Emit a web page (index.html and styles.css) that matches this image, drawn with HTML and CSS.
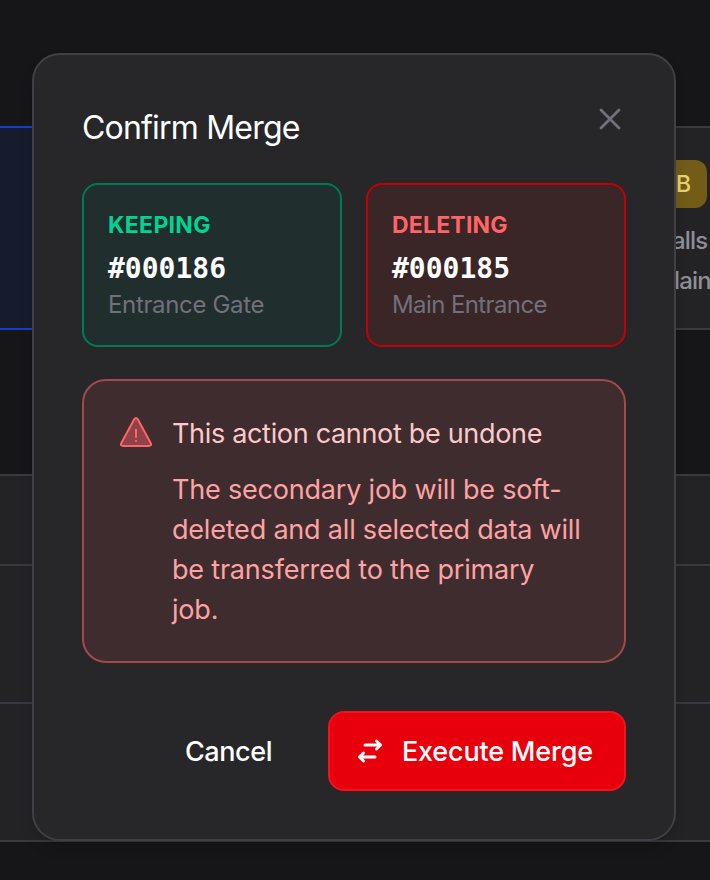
FILE: index.html
```html
<!DOCTYPE html>
<html lang="en">
<head>
    <meta charset="UTF-8">
    <meta name="viewport" content="width=device-width, initial-scale=1.0">
    <title>Confirm Merge</title>
    <link rel="stylesheet" href="styles.css">
</head>
<body>
    <!-- Page behind the dialog -->
    <div class="page">
        <div class="jobs">
            <div class="job job-selected"></div>
            <div class="job job-other">
                <span class="badge">B</span>
                <p class="job-line">alls</p>
                <p class="job-line job-address">lain</p>
            </div>
        </div>
        <div class="table">
            <div class="table-head"></div>
            <div class="table-row"></div>
            <div class="table-row"></div>
        </div>
    </div>

    <!-- Dialog -->
    <div class="overlay">
        <div class="dialog" role="dialog" aria-modal="true" aria-labelledby="dialog-title">
            <div class="dialog-header">
                <h2 class="dialog-title" id="dialog-title">Confirm Merge</h2>
                <button class="close" type="button" aria-label="Close">
                    <svg width="32" height="32" viewBox="0 0 32 32" fill="none" stroke="currentColor" stroke-width="2.8" stroke-linecap="round">
                        <path d="M7 7l18 18M25 7L7 25"/>
                    </svg>
                </button>
            </div>

            <div class="cards">
                <div class="card card-keep">
                    <div class="card-label keep-label">KEEPING</div>
                    <div class="card-number">#000186</div>
                    <div class="card-place keep-place">Entrance Gate</div>
                </div>
                <div class="card card-delete">
                    <div class="card-label delete-label">DELETING</div>
                    <div class="card-number">#000185</div>
                    <div class="card-place">Main Entrance</div>
                </div>
            </div>

            <div class="warning">
                <svg class="warning-icon" width="32" height="32" viewBox="0 0 32 32" fill="none" stroke="#ff6467" stroke-width="2" stroke-linecap="round" stroke-linejoin="round">
                    <path d="M14.2 2.3Q16 -.2 17.8 2.3L30.8 26.2Q31.7 29 29 29H3Q.3 29 1.2 26.2Z" fill="#8f4347"/>
                    <path d="M16 12.5v7.5M16 24.1v.2" stroke-width="2"/>
                </svg>
                <div class="warning-text">
                    <h3 class="warning-title">This action cannot be undone</h3>
                    <p class="warning-body">The secondary job will be soft-<br>deleted and all selected data will<br>be transferred to the primary<br>job.</p>
                </div>
            </div>

            <div class="actions">
                <button class="btn btn-cancel" type="button">Cancel</button>
                <button class="btn btn-merge" type="button">
                    <svg width="32" height="32" viewBox="0 0 32 32" fill="none" stroke="currentColor" stroke-width="3" stroke-linecap="round" stroke-linejoin="round">
                        <path d="M11 10H26.5M22.5 6L26.5 10L22.5 14M21 22H5.5M9.5 18L5.5 22L9.5 26"/>
                    </svg>
                    <span>Execute Merge</span>
                </button>
            </div>
        </div>
    </div>
</body>
</html>
```

FILE: styles.css
```css
* {
    box-sizing: border-box;
}
body {
    margin: 0;
    height: 880px;
    overflow: hidden;
    background-color: #161618;
    color: #fff;
    font-family: Inter, "Noto Sans", sans-serif;
}
h2, h3, p {
    margin: 0;
}
svg {
    display: block;
    flex-shrink: 0;
}
button {
    font: inherit;
    padding: 0;
    border: 0;
    background: none;
}

/* page */
.page {
    padding-top: 126px;
}
.jobs {
    display: grid;
    grid-template-columns: 300px 1fr;
    gap: 48px;
    height: 204px;
    margin-bottom: 144px;
}
.job {
    border: 2px solid #3a3a3e;
    border-width: 2px 0;
}
.job-selected {
    background-color: #161c2e;
    border-color: #123fce;
}
.job-other {
    display: flex;
    flex-direction: column;
    align-items: flex-start;
    padding: 32px 0 0 300px;
    background-color: #232325;
}
.badge {
    height: 48px;
    width: 59px;
    padding-left: 28px;
    margin-bottom: 12px;
    border-radius: 12px;
    background-color: #735c17;
    color: #e6d36c;
    font-size: 23px;
    font-weight: 500;
    line-height: 48px;
}
.job-line {
    padding-left: 24px;
    color: #8f8f99;
    font-size: 24px;
    font-weight: 450;
    line-height: 41px;
    height: 40px;
    letter-spacing: -0.8px;
    white-space: nowrap;
}
.job-address {
    padding-left: 26px;
}
.table {
    height: 368px;
    border: 2px solid #3a3a3e;
    border-width: 2px 0;
    background-color: #232325;
}
.table-head {
    height: 90px;
    border-bottom: 2px solid #38383e;
}
.table-row {
    height: 138px;
}
.table-row:not(:last-child) {
    border-bottom: 2px solid #38383e;
}

/* dialog */
.overlay {
    position: absolute;
    inset: 0;
    padding: 53px 34px 0 32px;
}
.dialog {
    padding: 48px;
    border: 2px solid #3f3f46;
    border-radius: 28px;
    background-color: #27272a;
    box-shadow: 0 8px 16px -4px rgba(0, 0, 0, 0.2);
}
.dialog-header {
    display: flex;
    justify-content: space-between;
    align-items: flex-start;
    height: 48px;
    margin-bottom: 32px;
}
.dialog-title {
    font-size: 32px;
    font-weight: 400;
    line-height: 50px;
    letter-spacing: -0.8px;
}
.close {
    color: #71717b;
}
.cards {
    display: grid;
    grid-template-columns: 1fr 1fr;
    gap: 24px;
    margin-bottom: 32px;
}
.card {
    padding: 24px;
    border: 2px solid;
    border-radius: 16px;
}
.card-keep {
    border-color: #007a55;
    background-color: #202e2d;
}
.card-delete {
    border-color: #c10007;
    background-color: #3a2527;
}
.card-label {
    margin-bottom: 8px;
    font-size: 23px;
    font-weight: 650;
    line-height: 32px;
    letter-spacing: 0.2px;
}
.keep-label {
    color: #00d492;
    letter-spacing: 0.3px;
}
.delete-label {
    color: #ff6467;
}
.card-number {
    font-family: "DejaVu Sans Mono", monospace;
    font-size: 28px;
    font-weight: 700;
    line-height: 40px;
}
.card-place {
    color: #71717b;
    font-size: 24px;
    font-weight: 420;
    line-height: 32px;
    letter-spacing: -0.6px;
}
.keep-place {
    letter-spacing: -0.35px;
}
.warning {
    display: flex;
    gap: 20px;
    height: 284px;
    margin-bottom: 48px;
    padding: 33px 34px 0 36px;
    border: 2px solid #a2494d;
    border-radius: 24px;
    background-color: #3e2c2f;
}
.warning-icon {
    margin-top: 3px;
}
.warning-title {
    margin-bottom: 16px;
    color: #ffc9c9;
    font-size: 27px;
    font-weight: 430;
    line-height: 40px;
    letter-spacing: -0.32px;
    white-space: nowrap;
}
.warning-body {
    color: #ffa2a2;
    font-size: 27px;
    font-weight: 420;
    line-height: 40px;
    letter-spacing: -0.2px;
    white-space: nowrap;
}
.actions {
    display: flex;
    justify-content: flex-end;
    gap: 24px;
}
.btn {
    display: flex;
    align-items: center;
    justify-content: center;
    height: 80px;
    border-radius: 16px;
    color: #fff;
    font-size: 27px;
    font-weight: 450;
    letter-spacing: -0.4px;
}
.btn-cancel {
    width: 151px;
}
.btn-merge {
    justify-content: flex-start;
    gap: 16px;
    width: 298px;
    padding-left: 24px;
    border: 2px solid #f5121d;
    background-color: #e7000b;
    letter-spacing: -0.2px;
}
```
